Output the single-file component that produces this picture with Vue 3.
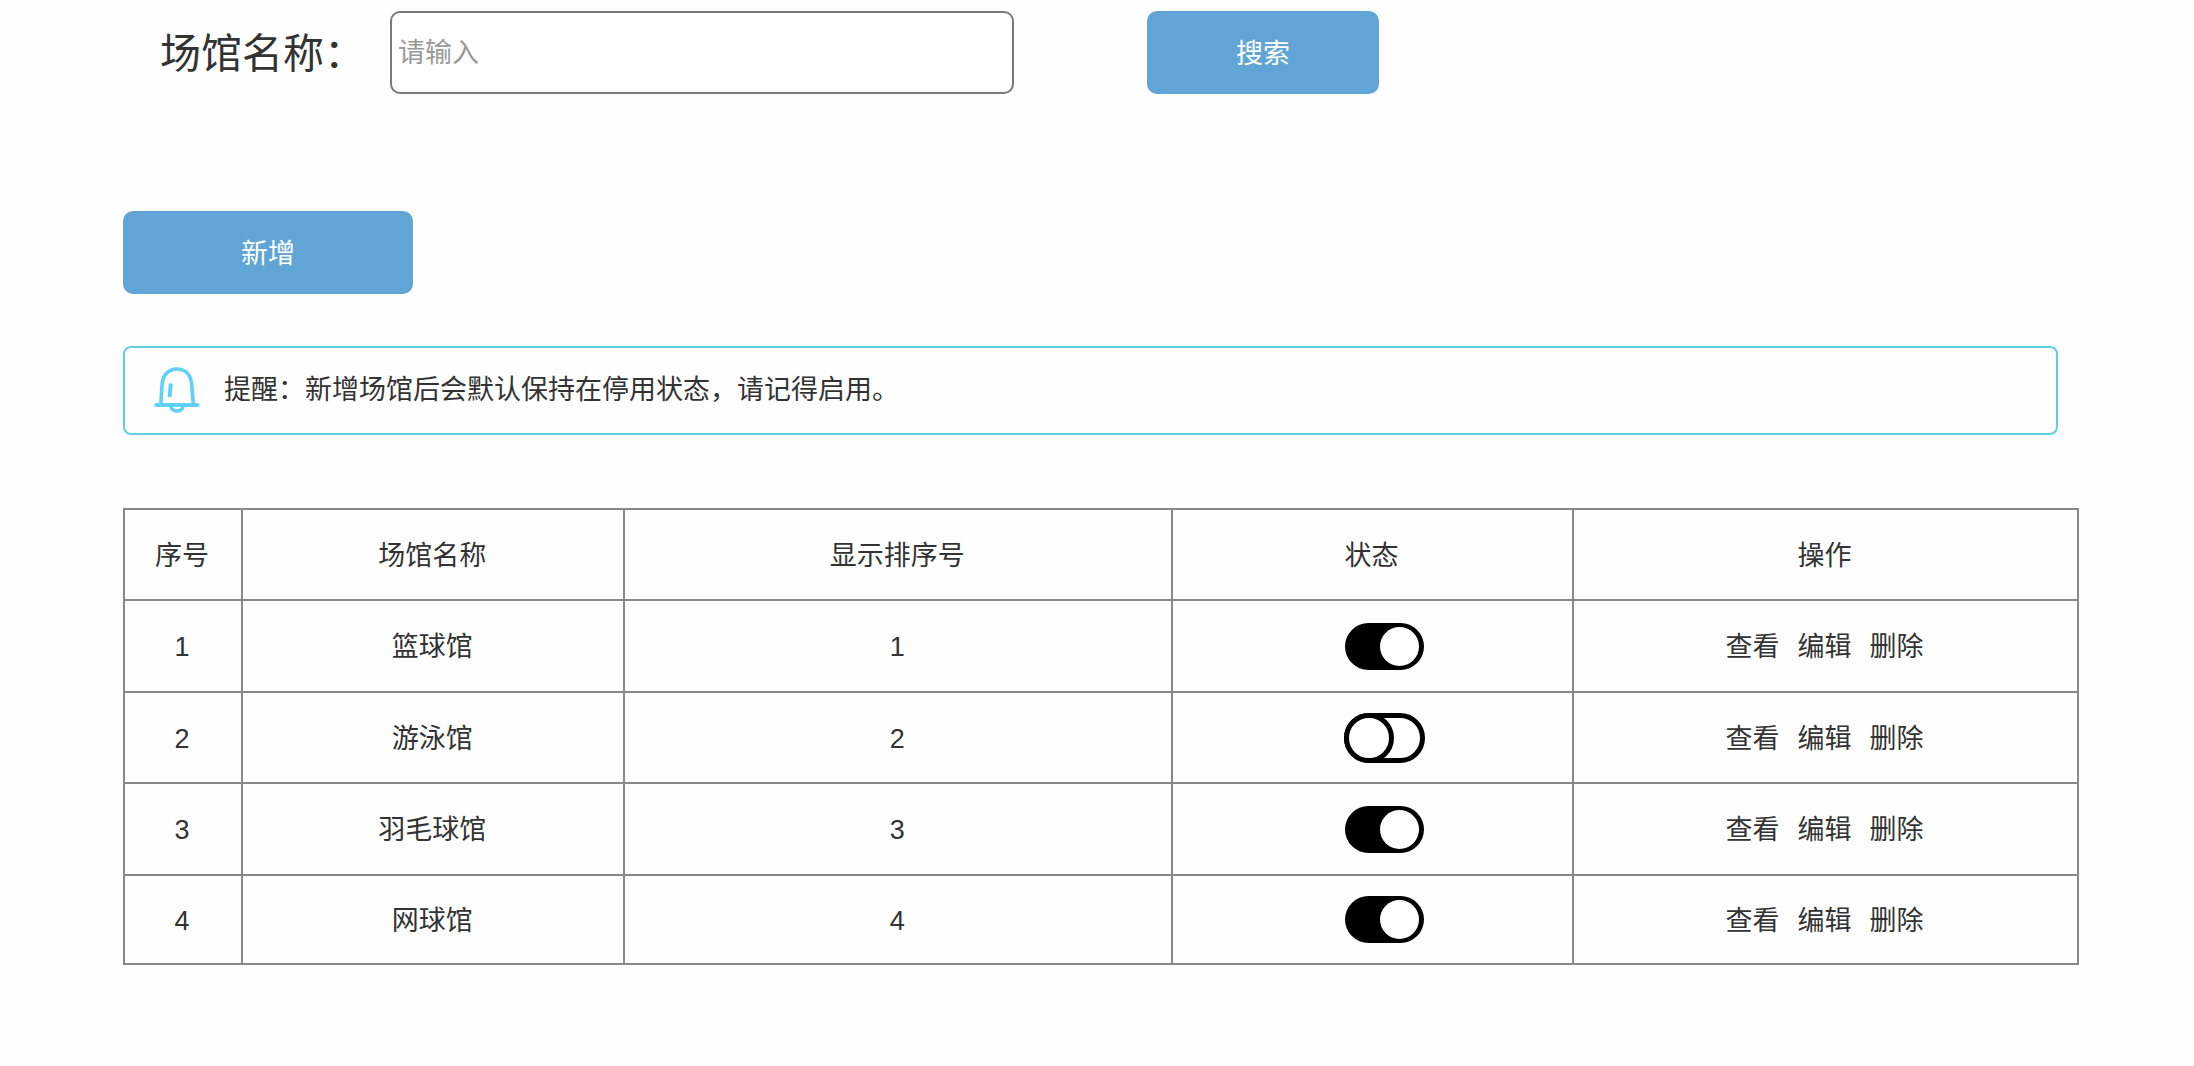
<script setup>
import { ref } from 'vue'

const keyword = ref('')

const venues = ref([
  { id: 1, name: '篮球馆', order: 1, enabled: true },
  { id: 2, name: '游泳馆', order: 2, enabled: false },
  { id: 3, name: '羽毛球馆', order: 3, enabled: true },
  { id: 4, name: '网球馆', order: 4, enabled: true },
])

const actions = ['查看', '编辑', '删除']
</script>

<template>
  <main class="page">
    <form class="search" @submit.prevent>
      <label class="search-label" for="venue-name">场馆名称：</label>
      <input id="venue-name" v-model="keyword" class="search-input" type="text" placeholder="请输入" />
      <button class="btn btn-search" type="submit">搜索</button>
    </form>

    <button class="btn btn-add" type="button">新增</button>

    <p class="notice">
      <svg class="bell" viewBox="0 0 46 46" fill="none" stroke="#5ed0fb" stroke-linecap="round" aria-hidden="true">
        <path d="M6.800 37.500 8 18C8.600 8 14.500 2 23 2S37 8 37.700 18L39.300 37.500" stroke-width="3.600" />
        <path d="M2.200 38H43.500" stroke-width="4" />
        <path d="M17 39.500C18.500 45.500 27.500 45.500 29 39.500" stroke-width="3.400" />
        <path d="M16.600 18.500 15.800 28" stroke-width="4" stroke-linecap="square" />
      </svg>
      <span>提醒：新增场馆后会默认保持在停用状态，请记得启用。</span>
    </p>

    <table class="venues">
      <colgroup>
        <col class="col-index" />
        <col class="col-name" />
        <col class="col-order" />
        <col class="col-state" />
        <col />
      </colgroup>
      <thead>
        <tr>
          <th scope="col">序号</th>
          <th scope="col">场馆名称</th>
          <th scope="col">显示排序号</th>
          <th scope="col">状态</th>
          <th scope="col">操作</th>
        </tr>
      </thead>
      <tbody>
        <tr v-for="venue in venues" :key="venue.id">
          <td>{{ venue.id }}</td>
          <td>{{ venue.name }}</td>
          <td>{{ venue.order }}</td>
          <td class="state">
            <input v-model="venue.enabled" class="switch" type="checkbox" role="switch" :aria-label="venue.name" />
          </td>
          <td>
            <div class="actions">
              <a v-for="action in actions" :key="action" href="#" @click.prevent>{{ action }}</a>
            </div>
          </td>
        </tr>
      </tbody>
    </table>
  </main>
</template>

<style>
body {
  background: #fefefe;
}
</style>

<style scoped>
.page {
  padding: 11px 115px 40px 123px;
  color: #333;
  font-family: "Liberation Sans", "Noto Sans CJK SC", sans-serif;
  font-size: 27px;
  line-height: 40px;
}

.search {
  display: flex;
  align-items: center;
  padding-left: 37px;
}

.search-label {
  width: 230px;
  padding-top: 2px;
  font-size: 41px;
  line-height: 60px;
  white-space: nowrap;
}

.search-input {
  box-sizing: border-box;
  width: 624px;
  height: 83px;
  padding: 2px 6px 0;
  border: 2px solid #797979;
  border-radius: 10px;
  background: #fff;
  color: inherit;
  font: inherit;
}

.search-input::placeholder {
  color: #999;
  opacity: 1;
}

.btn {
  display: block;
  height: 83px;
  padding: 2px 0 0;
  border: 0;
  border-radius: 10px;
  background: #61a5d7;
  color: #fff;
  font: inherit;
  cursor: pointer;
}

.btn-search {
  width: 232px;
  margin-left: 133px;
}

.btn-add {
  width: 290px;
  margin-top: 117px;
}

.notice {
  display: flex;
  align-items: center;
  gap: 24px;
  box-sizing: border-box;
  height: 89px;
  margin: 52px 21px 0 0;
  padding: 0 29px 2px;
  border: 2px solid #60cfe1;
  border-radius: 8px;
}

.bell {
  width: 46px;
  height: 46px;
}

.venues {
  width: 100%;
  margin-top: 73px;
  border-collapse: collapse;
  table-layout: fixed;
  text-align: center;
}

.col-index {
  width: 6.05%;
}

.col-name {
  width: 19.55%;
}

.col-order {
  width: 28.05%;
}

.col-state {
  width: 20.5%;
}

.venues tr {
  height: 91px;
}

.venues tbody tr:nth-child(odd) {
  height: 92px;
}

.venues tbody tr:last-child {
  height: 89px;
}

.venues th,
.venues td {
  padding: 2px 2px 0 0;
  border: 2px solid #888;
  font-weight: 400;
}

.venues .state {
  padding: 0 0 0 24px;
}

.switch {
  display: block;
  box-sizing: border-box;
  width: 81px;
  height: 50px;
  margin: 0 auto;
  border: 5px solid #000;
  border-radius: 25px;
  background: #fff;
  appearance: none;
  cursor: pointer;
}

.switch::before {
  content: "";
  display: block;
  box-sizing: border-box;
  width: 50px;
  height: 50px;
  margin: -5px;
  border: 5px solid #000;
  border-radius: 50%;
  background: #fff;
}

.switch:checked {
  width: 79px;
  height: 47px;
  border-width: 4px 5px;
  background: #000;
}

.switch:checked::before {
  width: 39px;
  height: 39px;
  margin: 0 0 0 auto;
  border: 0;
}

.actions {
  display: flex;
  justify-content: center;
  gap: 18px;
}

.actions a {
  color: inherit;
  text-decoration: none;
}
</style>
